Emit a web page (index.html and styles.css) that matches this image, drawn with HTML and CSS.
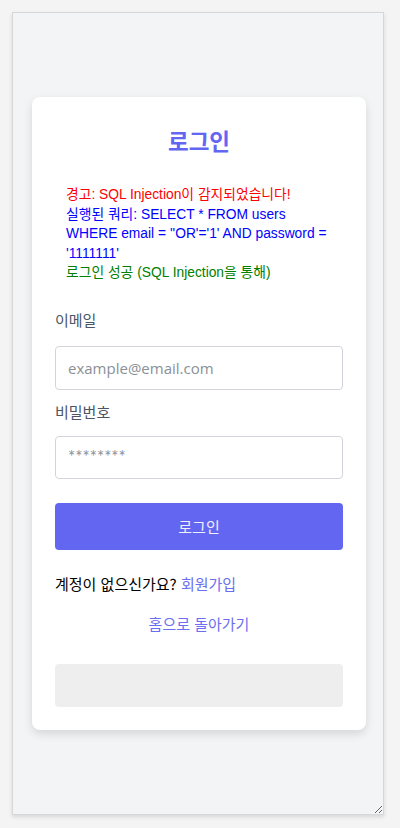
FILE: index.html
```html
<!DOCTYPE html>
<html lang="ko">
<head>
<meta charset="utf-8">
<title>로그인</title>
<link rel="stylesheet" href="styles.css">
</head>
<body>
<div class="frame">
  <div class="card">
    <h1 class="title">로그인</h1>
    <div class="messages">
      <p class="msg msg-warn">경고: SQL Injection이 감지되었습니다!</p>
      <p class="msg msg-query">실행된 쿼리: SELECT * FROM users WHERE email = ''OR'='1' AND password = '1111111'</p>
      <p class="msg msg-ok">로그인 성공 (SQL Injection을 통해)</p>
    </div>
    <form class="form">
      <label class="label" for="email">이메일</label>
      <input class="input input-email" id="email" type="text" placeholder="example@email.com">
      <label class="label label-pw" for="pw">비밀번호</label>
      <input class="input input-pw" id="pw" type="password" placeholder="********">
      <button class="btn" type="button">로그인</button>
    </form>
    <p class="signup">계정이 없으신가요? <a class="link" href="#">회원가입</a></p>
    <p class="home"><a class="link" href="#">홈으로 돌아가기</a></p>
    <div class="result"></div>
  </div>
</div>
</body>
</html>
```
FILE: styles.css
```css
html, body {
  margin: 0;
  padding: 0;
}
body {
  background: #f4f4f5;
  padding: 12px;
  font-family: "Open Sans", "Noto Sans CJK KR", sans-serif;
}
.frame {
  box-sizing: border-box;
  width: 372px;
  height: 803px;
  padding-left: 2px;
  border: 1px solid #d6d7d9;
  background: #f3f4f6;
  box-shadow: 0 2px 4px rgba(0, 0, 0, 0.12);
  resize: both;
  overflow: auto;
  display: flex;
  align-items: center;
  justify-content: center;
}
.card {
  box-sizing: border-box;
  width: 334px;
  padding: 23px;
  background: #fff;
  border-radius: 8px;
  box-shadow: 0 4px 10px rgba(0, 0, 0, 0.12);
}
.title {
  margin: 5px 0 0;
  font-family: "Noto Sans CJK KR", sans-serif;
  font-size: 22.5px;
  line-height: 30px;
  font-weight: 700;
  color: #6366f1;
  text-align: center;
}
.messages {
  margin-top: 20px;
  padding: 10px 11px;
  font-family: "Liberation Sans", "Noto Sans CJK KR", sans-serif;
  font-size: 13.8px;
  line-height: 19.5px;
}
.msg {
  margin: 0;
}
.msg-warn { color: #ff0000; }
.msg-query { color: #0000ff; }
.msg-ok { color: #008000; }
.form {
  display: flex;
  flex-direction: column;
  margin-top: 15px;
}
.label {
  font-family: "Noto Sans CJK KR", sans-serif;
  font-size: 15px;
  line-height: 24px;
  color: #4b5563;
}
.label-pw {
  margin-top: 10px;
}
.input {
  box-sizing: border-box;
  width: 100%;
  border: 1px solid #d1d5db;
  border-radius: 4px;
  padding: 0 12px;
  font-family: "Open Sans", "Noto Sans CJK KR", sans-serif;
  font-size: 15px;
  background: #fff;
  outline: none;
}
.input::placeholder {
  color: #8b8f96;
}
.input-pw::placeholder {
  font-family: "Lato", sans-serif;
  font-size: 17px;
}
.input-email {
  margin-top: 14px;
  height: 44px;
}
.input-pw {
  margin-top: 12px;
  height: 43px;
}
.btn {
  margin-top: 24px;
  height: 47px;
  border: none;
  border-radius: 4px;
  background: #6366f1;
  color: #f2f2ff;
  font-family: "Noto Sans CJK KR", sans-serif;
  font-size: 15px;
}
.signup {
  margin: 23px 0 0;
  font-family: "Noto Sans CJK KR", sans-serif;
  font-size: 15px;
  line-height: 22px;
  color: #000;
}
.home {
  margin: 18px 0 0;
  font-family: "Noto Sans CJK KR", sans-serif;
  font-size: 15px;
  line-height: 22px;
  text-align: center;
}
.link {
  color: #6b6ef0;
  text-decoration: none;
}
.result {
  margin-top: 29px;
  height: 43px;
  background: #eeeeee;
  border-radius: 4px;
}
```
